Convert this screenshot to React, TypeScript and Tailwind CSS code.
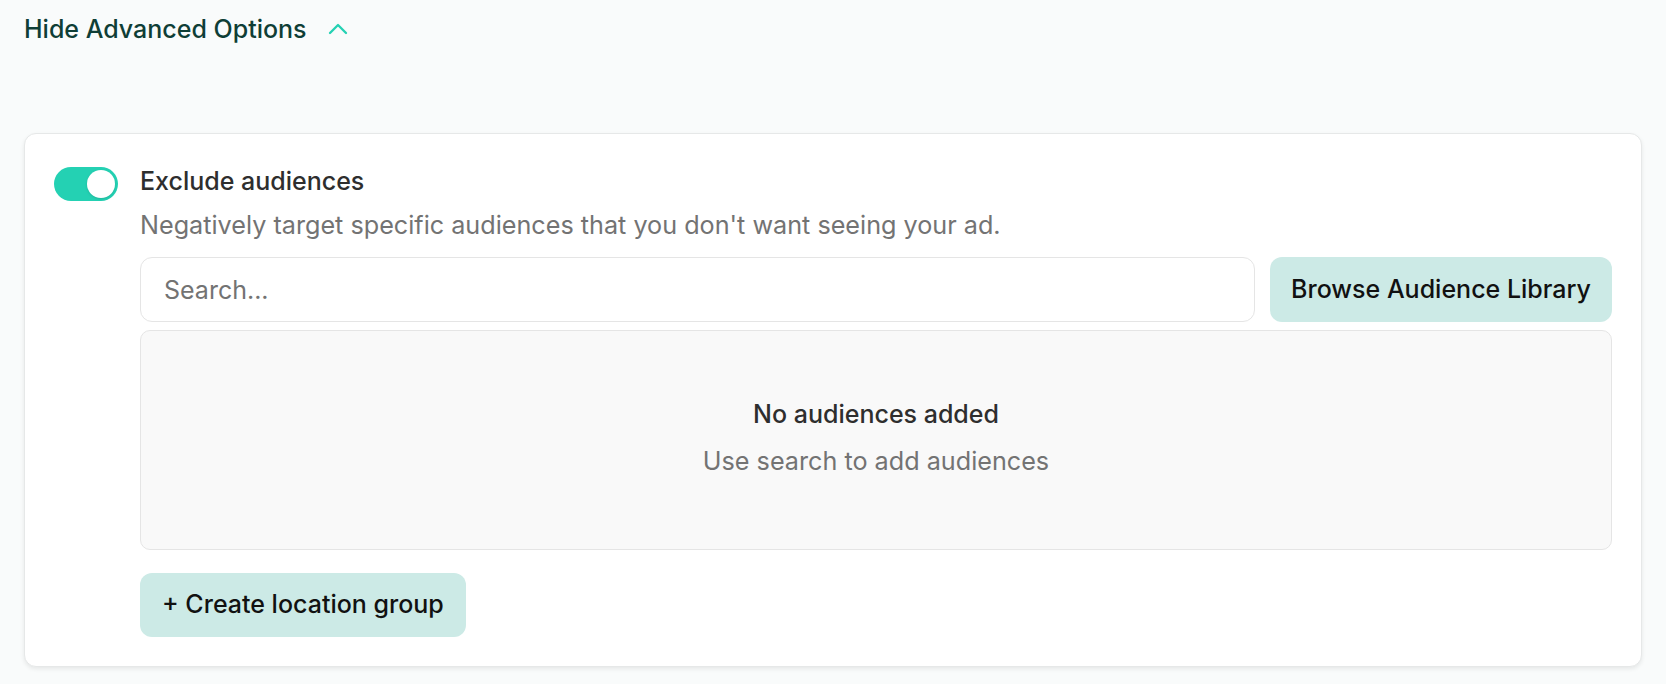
import { useState } from 'react';
import { ChevronUp } from 'lucide-react';

function Toggle({ on, onChange }: { on: boolean; onChange: (v: boolean) => void }) {
  return (
    <button
      type="button"
      onClick={() => onChange(!on)}
      className={`relative mt-[2px] h-[34px] w-16 shrink-0 rounded-full transition-colors ${on ? 'bg-[#24d1b3]' : 'bg-gray-300'}`}
    >
      <span
        className={`absolute top-[3px] h-[28px] w-[28px] rounded-full bg-white shadow-sm transition-all ${on ? 'left-[33px]' : 'left-[3px]'}`}
      />
    </button>
  );
}

export default function App() {
  const [showAdvanced, setShowAdvanced] = useState(true);
  const [exclude, setExclude] = useState(true);
  const [query, setQuery] = useState('');

  return (
    <div className="min-h-screen bg-[#f9fbfb] px-6 pt-[13px] font-['Inter',sans-serif]">
      <button
        type="button"
        onClick={() => setShowAdvanced(!showAdvanced)}
        className="flex items-center gap-[15px] text-[25px] leading-[32px] font-medium text-[#0f3e36]"
      >
        Hide Advanced Options
        <ChevronUp className="h-8 w-8 text-[#24d1b3]" strokeWidth={1.75} />
      </button>

      {showAdvanced && (
        <div className="mt-[88px] rounded-xl border border-[#e6e8e8] bg-white px-[29px] pt-[31px] pb-[29px] shadow-[0_2px_4px_rgba(0,0,0,0.08)]">
          <div className="flex gap-[22px]">
            <Toggle on={exclude} onChange={setExclude} />
            <div className="flex-1">
              <h3 className="text-[25px] leading-[32px] font-medium text-[#2e2e2e]">Exclude audiences</h3>
              <p className="mt-[12px] text-[25.2px] leading-[32px] text-[#737373]">
                Negatively target specific audiences that you don't want seeing your ad.
              </p>

              <div className="mt-[16px] flex gap-[15px]">
                <input
                  value={query}
                  onChange={(e) => setQuery(e.target.value)}
                  placeholder="Search..."
                  className="h-[65px] flex-1 rounded-xl border border-[#e5e5e5] bg-white px-[23px] text-[25px] text-[#2b2b2b] placeholder:text-[#737373] focus:outline-none"
                />
                <button
                  type="button"
                  className="h-[65px] rounded-xl bg-[#cceae6] px-[21px] text-[25px] font-medium text-[#111]"
                >
                  Browse Audience Library
                </button>
              </div>

              <div className="mt-[8px] flex h-[220px] flex-col items-center justify-center rounded-[10px] border border-[#e5e5e5] bg-[#f9f9f9] pb-[5px]">
                <p className="text-[25px] leading-[32px] font-medium text-[#2e2e2e]">No audiences added</p>
                <p className="mt-[15px] text-[25.2px] leading-[32px] text-[#737373]">Use search to add audiences</p>
              </div>

              <button
                type="button"
                className="mt-[23px] h-[64px] rounded-xl bg-[#cceae6] px-[22px] text-[25px] font-medium text-[#111]"
              >
                + Create location group
              </button>
            </div>
          </div>
        </div>
      )}
    </div>
  );
}
